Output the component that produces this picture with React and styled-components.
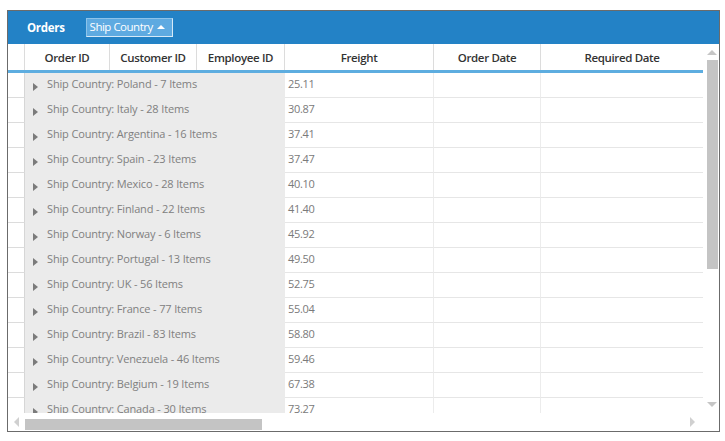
import React from 'react';
import styled, { createGlobalStyle } from 'styled-components';

const GlobalStyles = createGlobalStyle`
  html, body { margin: 0; padding: 0; background: #fff; }
  body { font-family: "Open Sans", "Noto Sans", sans-serif; }
`;

const groups = [
  { country: 'Poland', count: 7, freight: '25.11' },
  { country: 'Italy', count: 28, freight: '30.87' },
  { country: 'Argentina', count: 16, freight: '37.41' },
  { country: 'Spain', count: 23, freight: '37.47' },
  { country: 'Mexico', count: 28, freight: '40.10' },
  { country: 'Finland', count: 22, freight: '41.40' },
  { country: 'Norway', count: 6, freight: '45.92' },
  { country: 'Portugal', count: 13, freight: '49.50' },
  { country: 'UK', count: 56, freight: '52.75' },
  { country: 'France', count: 77, freight: '55.04' },
  { country: 'Brazil', count: 83, freight: '58.80' },
  { country: 'Venezuela', count: 46, freight: '59.46' },
  { country: 'Belgium', count: 19, freight: '67.38' },
  { country: 'Canada', count: 30, freight: '73.27' },
];

const columns = ['Order ID', 'Customer ID', 'Employee ID', 'Freight', 'Order Date', 'Required Date'];

const COLS = '17px 85px 87px 88px 149px 107px 162px';

const Page = styled.div`
  padding: 10px 0 0 7px;
`;

const Grid = styled.div`
  width: 711px;
  border: 1px solid #6b6b6b;
  background: #fff;
  display: flex;
  flex-direction: column;
`;

const Toolbar = styled.div`
  height: 33px;
  background: #2382c6;
  display: flex;
  align-items: center;
  padding-left: 19px;
  gap: 21px;
`;

const Title = styled.span`
  color: #fff;
  font-size: 11.5px;
  font-weight: 700;
  letter-spacing: -0.3px;
`;

const GroupChip = styled.div`
  height: 19px;
  width: 87px;
  box-sizing: border-box;
  background: #5eaae1;
  border: 1px solid #8cc3ea;
  border-right-color: #d6e9f7;
  border-bottom-color: #d6e9f7;
  display: flex;
  align-items: center;
  justify-content: space-between;
  padding: 0 7px 1px 3px;
  color: #fff;
  font-size: 11.5px;
  letter-spacing: -0.5px;
  white-space: nowrap;
  margin-top: -1px;
`;

const ChipArrow = styled.span`
  border-left: 4px solid transparent;
  border-right: 4px solid transparent;
  border-bottom: 4px solid #fff;
  margin-top: 1px;
`;

const Main = styled.div`
  display: flex;
`;

const TableArea = styled.div`
  width: 695px;
  height: 369px;
  overflow: hidden;
  display: flex;
  flex-direction: column;
`;

const HeaderRow = styled.div`
  display: grid;
  grid-template-columns: ${COLS};
  height: 26px;
  flex-shrink: 0;
  border-bottom: 3px solid #5dade0;
`;

const HeaderCell = styled.div`
  display: flex;
  align-items: center;
  justify-content: center;
  border-right: 1px solid #dcdcdc;
  color: #333;
  font-size: 11.5px;
  font-weight: 600;
  letter-spacing: -0.35px;
  padding-top: 1px;
  &:last-child { border-right: none; }
`;

const Row = styled.div`
  display: grid;
  grid-template-columns: ${COLS};
  height: 25px;
  flex-shrink: 0;
`;

const IndentCell = styled.div`
  border-right: 1px solid #d6d6d6;
  border-bottom: 1px solid #dcdcdc;
`;

const GroupCell = styled.div`
  grid-column: span 3;
  background: #ebebeb;
  display: flex;
  align-items: center;
  padding-left: 8px;
  gap: 9px;
  color: #808080;
  font-size: 11px;
  letter-spacing: -0.15px;
  padding-bottom: 4px;
`;

const Arrow = styled.span`
  width: 0;
  height: 0;
  border-top: 4px solid transparent;
  border-bottom: 4px solid transparent;
  border-left: 5px solid #7b7b7b;
  margin-top: 6px;
`;

const DataCell = styled.div`
  border-right: 1px solid #ececec;
  border-bottom: 1px solid #e6e6e6;
  display: flex;
  align-items: center;
  padding-left: 3px;
  padding-bottom: 4px;
  color: #7a7a7a;
  font-size: 11px;
  letter-spacing: -0.3px;
  &:last-child { border-right: none; }
`;

const VScroll = styled.div`
  width: 16px;
  height: 369px;
  display: flex;
  flex-direction: column;
  align-items: center;
  padding-top: 6px;
  box-sizing: border-box;
`;

const VThumb = styled.div`
  width: 11px;
  height: 209px;
  background: #c4c4c4;
  margin-top: 5px;
  margin-left: 2px;
`;

const Spacer = styled.div`
  flex: 1;
`;

const UpArrow = styled.span`
  border-left: 5px solid transparent;
  border-right: 5px solid transparent;
  border-bottom: 5px solid #c6c6c6;
  margin-left: 2px;
`;

const DownArrow = styled.span`
  border-left: 5px solid transparent;
  border-right: 5px solid transparent;
  border-top: 5px solid #c6c6c6;
  margin: 0 0 6px 2px;
`;

const HScroll = styled.div`
  height: 18px;
  display: flex;
  align-items: center;
  padding: 0 24px 0 6px;
`;

const LeftArrow = styled.span`
  border-top: 5px solid transparent;
  border-bottom: 5px solid transparent;
  border-right: 5px solid #d0d0d0;
`;

const RightArrow = styled.span`
  border-top: 5px solid transparent;
  border-bottom: 5px solid transparent;
  border-left: 5px solid #d0d0d0;
`;

const HThumb = styled.div`
  width: 237px;
  height: 11px;
  background: #c4c4c4;
  margin-left: 6px;
  margin-top: 4px;
`;

export default function App() {
  return (
    <Page>
      <GlobalStyles />
      <Grid>
        <Toolbar>
          <Title>Orders</Title>
          <GroupChip>
            <span>Ship Country</span>
            <ChipArrow />
          </GroupChip>
        </Toolbar>
        <Main>
          <TableArea>
            <HeaderRow>
              <HeaderCell />
              {columns.map((c) => (
                <HeaderCell key={c}>{c}</HeaderCell>
              ))}
            </HeaderRow>
            {groups.map((g) => (
              <Row key={g.country}>
                <IndentCell />
                <GroupCell>
                  <Arrow />
                  <span>Ship Country: {g.country} - {g.count} Items</span>
                </GroupCell>
                <DataCell>{g.freight}</DataCell>
                <DataCell />
                <DataCell />
              </Row>
            ))}
          </TableArea>
          <VScroll>
            <UpArrow />
            <VThumb />
            <Spacer />
            <DownArrow />
          </VScroll>
        </Main>
        <HScroll>
          <LeftArrow />
          <HThumb />
          <Spacer />
          <RightArrow />
        </HScroll>
      </Grid>
    </Page>
  );
}
